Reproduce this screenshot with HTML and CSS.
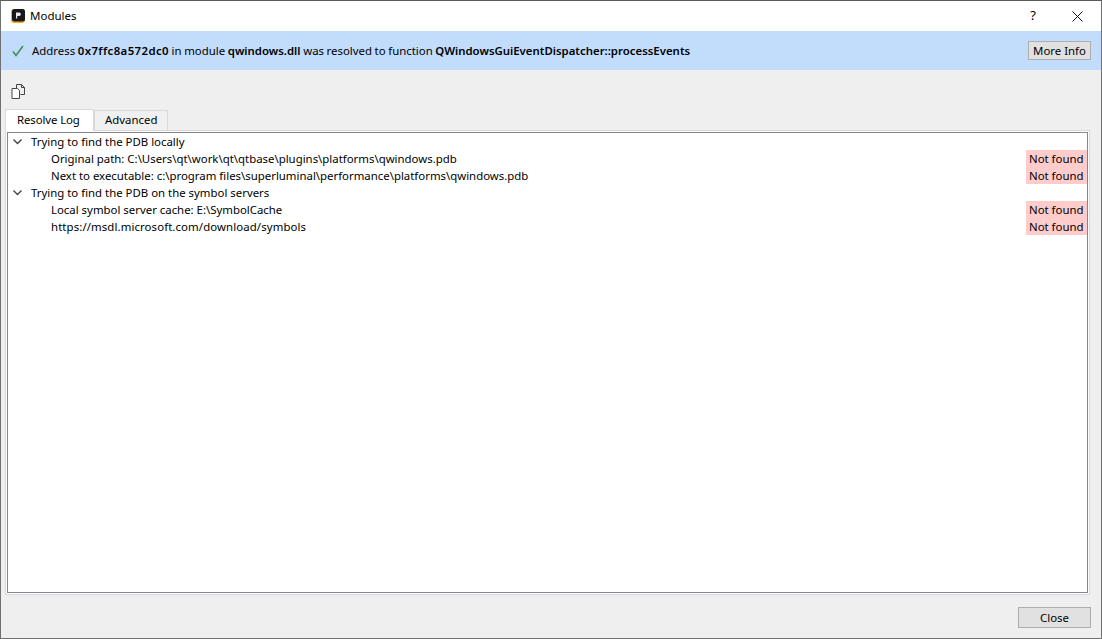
FILE: index.html
```html
<!DOCTYPE html>
<html lang="en">
<head>
<meta charset="utf-8">
<title>Modules</title>
<link rel="stylesheet" href="styles.css">
</head>
<body>
<div class="window">
  <header class="titlebar">
    <svg class="app-icon" width="14" height="14" viewBox="0 0 14 14"><rect x="0" y="0" width="14" height="14" rx="3" fill="#f2b01e"/><rect x="1" y="0" width="13" height="12.5" rx="2.5" fill="#17171c"/><path d="M5 3.5h3.2a1.6 1.6 0 0 1 0 3.4H6.2V9.5H5z" fill="#e8e8e8"/></svg>
    <span class="title">Modules</span>
    <span class="help">?</span>
    <svg class="close-x" width="11" height="11" viewBox="0 0 11 11"><path d="M0.5 0.5l10 10M10.5 0.5l-10 10" stroke="#111" stroke-width="1" fill="none"/></svg>
  </header>
  <div class="banner">
    <svg class="check" width="12" height="12" viewBox="0 0 12 12"><path d="M1 6.5l3 4L11 1" stroke="#3f8f4f" stroke-width="1.6" fill="none"/></svg>
    <span class="message">Address <b class="addr">0x7ffc8a572dc0</b> in module <b>qwindows.dll</b> was resolved to function <b>QWindowsGuiEventDispatcher::processEvents</b></span>
    <button class="btn more">More Info</button>
  </div>
  <div class="toolbar">
    <svg width="15" height="15" viewBox="0 0 15 15"><path d="M5.5 4.5V0.5h5l3 3v7h-4" fill="none" stroke="#444"/><path d="M10.5 0.5v3h3" fill="none" stroke="#444"/><path d="M1 4.5h5.5l2 2v8H1z" fill="#fff" stroke="#444"/></svg>
  </div>
  <div class="tabs">
    <div class="tab active">Resolve Log</div>
    <div class="tab">Advanced</div>
  </div>
  <div class="pane">
    <div class="tree">
      <div class="row parent"><svg class="chev" width="9" height="6" viewBox="0 0 9 6"><path d="M0.5 0.5l4 4 4-4" fill="none" stroke="#444" stroke-width="1.4"/></svg><span>Trying to find the PDB locally</span></div>
      <div class="row child"><span>Original path: C:\Users\qt\work\qt\qtbase\plugins\platforms\qwindows.pdb</span><span class="status">Not found</span></div>
      <div class="row child"><span>Next to executable: c:\program files\superluminal\performance\platforms\qwindows.pdb</span><span class="status">Not found</span></div>
      <div class="row parent"><svg class="chev" width="9" height="6" viewBox="0 0 9 6"><path d="M0.5 0.5l4 4 4-4" fill="none" stroke="#444" stroke-width="1.4"/></svg><span>Trying to find the PDB on the symbol servers</span></div>
      <div class="row child"><span>Local symbol server cache: E:\SymbolCache</span><span class="status">Not found</span></div>
      <div class="row child"><span class="url">https://msdl.microsoft.com/download/symbols</span><span class="status">Not found</span></div>
    </div>
  </div>
  <footer class="footer"><button class="btn close">Close</button></footer>
</div>
</body>
</html>
```
FILE: styles.css
```css
* { box-sizing: border-box; }
html, body { margin: 0; height: 100%; }
body { font: 11.4px/17px "Noto Sans", "Open Sans", sans-serif; color: #000; overflow: hidden; }
.window { width: 1102px; height: 639px; border: 1px solid #707070; border-top-color: #5a5a5a; background: #efefef; display: flex; flex-direction: column; }
.titlebar { height: 30px; background: #fff; display: flex; align-items: center; padding: 0 18px 0 10px; flex: none; }
.app-icon { margin-right: 5px; }
.title { flex: 1; font-size: 11.5px; margin-top: -2px; }
.help { margin: -2px 36px 0 0; font-size: 13px; }
.banner { height: 39px; background: #c2dcfc; display: flex; align-items: center; padding: 0 10px 0 11px; flex: none; }
.check { margin-right: 8px; }
.message { flex: 1; word-spacing: -0.35px; }
.message b { font-weight: 600; }
.message .addr { letter-spacing: 0.4px; }
.btn { font: inherit; color: #000; background: #e1e1e1; border: 1px solid #adadad; padding: 0; }
.more { width: 63px; height: 19px; line-height: 15px; }
.toolbar { height: 39px; flex: none; padding: 14px 0 0 10px; }
.toolbar svg { display: block; }
.tabs { display: flex; padding-left: 4px; height: 21px; flex: none; align-items: flex-end; }
.tab { height: 20px; width: 74px; padding-left: 10px; border: 1px solid #d9d9d9; border-bottom: 0; line-height: 18px; background: #f0f0f0; white-space: nowrap; }
.tab.active { height: 22px; width: 89px; padding-left: 11px; line-height: 20px; letter-spacing: -0.1px; background: #fff; position: relative; top: 1px; z-index: 1; }
.pane { margin: 0 11px 0 4px; height: 465px; border: 1px solid #d9d9d9; padding: 1px; flex: none; background: #fff; }
.tree { height: 100%; border: 1px solid #828790; background: #fff; }
.row { height: 17px; display: flex; align-items: center; }
.parent { padding-left: 5px; }
.chev { margin-right: 9px; flex: none; }
.child { padding-left: 43px; justify-content: space-between; }
.url { letter-spacing: 0.1px; }
.status { width: 61px; height: 17px; background: #ffcccc; padding-left: 3px; }
.footer { flex: 1; display: flex; justify-content: flex-end; align-items: flex-start; padding: 12px 10px 0 0; }
.close { width: 73px; height: 21px; }
```
